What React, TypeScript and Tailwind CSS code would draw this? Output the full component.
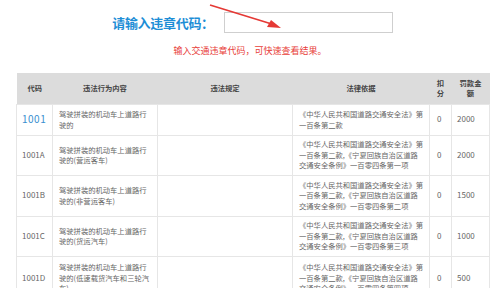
const font = { fontFamily: '"Noto Sans CJK SC", "Noto Sans", sans-serif' };

type Row = {
  code: string;
  act: string[];
  law: string[];
  points: string;
  fine: string;
  h: string;
};

const rows: Row[] = [
  {
    code: "1001",
    act: ["驾驶拼装的机动车上道路行", "驶的"],
    law: ["《中华人民共和国道路交通安全法》第", "一百条第二款"],
    points: "0",
    fine: "2000",
    h: "h-[31px]",
  },
  {
    code: "1001A",
    act: ["驾驶拼装的机动车上道路行", "驶的(营运客车)"],
    law: [
      "《中华人民共和国道路交通安全法》第",
      "一百条第二款,《宁夏回族自治区道路",
      "交通安全条例》一百零四条第一项",
    ],
    points: "0",
    fine: "2000",
    h: "h-[40px]",
  },
  {
    code: "1001B",
    act: ["驾驶拼装的机动车上道路行", "驶的(非营运客车)"],
    law: [
      "《中华人民共和国道路交通安全法》第",
      "一百条第二款,《宁夏回族自治区道路",
      "交通安全条例》一百零四条第二项",
    ],
    points: "0",
    fine: "1500",
    h: "h-[41px]",
  },
  {
    code: "1001C",
    act: ["驾驶拼装的机动车上道路行", "驶的(货运汽车)"],
    law: [
      "《中华人民共和国道路交通安全法》第",
      "一百条第二款,《宁夏回族自治区道路",
      "交通安全条例》一百零四条第三项",
    ],
    points: "0",
    fine: "1000",
    h: "h-[40px]",
  },
  {
    code: "1001D",
    act: ["驾驶拼装的机动车上道路行", "驶的(低速载货汽车和三轮汽", "车)"],
    law: [
      "《中华人民共和国道路交通安全法》第",
      "一百条第二款,《宁夏回族自治区道路",
      "交通安全条例》一百零四条第四项",
    ],
    points: "0",
    fine: "500",
    h: "h-[44px]",
  },
];

const Lines = ({ lines }: { lines: string[] }) => (
  <>
    {lines.map((l, i) => (
      <div key={i} className="whitespace-nowrap">
        {l}
      </div>
    ))}
  </>
);

export default function App() {
  return (
    <div className="w-[500px] h-[288px] overflow-hidden bg-white" style={font}>
      {/* search */}
      <div className="relative flex justify-center items-center gap-[10px] pt-[12px] pl-[5px]">
        <span className="text-[13px] font-bold text-[#1e8ed6] leading-[21px] tracking-[-0.3px]">
          请输入违章代码：
        </span>
        <div className="w-[169px] h-[21px] border border-[#cfcfcf] bg-white" />
        <svg
          className="absolute left-[205px] top-[2px]"
          width="85"
          height="30"
          viewBox="0 0 85 30"
        >
          <line x1="5" y1="3" x2="70" y2="23" stroke="#e53935" strokeWidth="1.6" />
          <polygon points="76,26 62,25 66,18" fill="#e53935" />
        </svg>
      </div>
      <p className="mt-[11px] text-center text-[9px] leading-[14px] text-[#e8403a]">
        输入交通违章代码，可快速查看结果。
      </p>

      {/* table */}
      <table className="ml-[16px] mt-[15px] w-[473px] table-fixed border-collapse text-[7.3px] leading-[10.5px] text-[#666]">
        <colgroup>
          <col className="w-[36px]" />
          <col className="w-[105px]" />
          <col className="w-[135px]" />
          <col className="w-[137px]" />
          <col className="w-[22px]" />
          <col className="w-[38px]" />
        </colgroup>
        <thead>
          <tr className="h-[31px] bg-[#dcdcdc] text-[#444] font-bold">
            <th className="px-[5px] text-left pl-[11px]">代码</th>
            <th className="text-center">违法行为内容</th>
            <th className="text-center">违法规定</th>
            <th className="text-center">法律依据</th>
            <th className="text-center px-[6px]">扣分</th>
            <th className="text-center px-[8px]">罚款金额</th>
          </tr>
        </thead>
        <tbody>
          {rows.map((r, i) => (
            <tr key={r.code} className={r.h}>
              <td className="border border-[#e6e6e6] pl-[5px] align-middle">
                {i === 0 ? (
                  <span className="text-[10px] text-[#3a8fd0] tracking-[0.5px]">{r.code}</span>
                ) : (
                  <span className="text-[8px]">{r.code}</span>
                )}
              </td>
              <td className="border border-[#e6e6e6] px-[6px] align-middle">
                <Lines lines={r.act} />
              </td>
              <td className="border border-[#e6e6e6]" />
              <td className="border border-[#e6e6e6] px-[6px] align-middle">
                <Lines lines={r.law} />
              </td>
              <td className="border border-[#e6e6e6] pl-[7px] text-[8px] align-middle">
                {r.points}
              </td>
              <td className="border border-[#e6e6e6] pl-[5px] text-[8px] align-middle">
                {r.fine}
              </td>
            </tr>
          ))}
        </tbody>
      </table>
    </div>
  );
}
